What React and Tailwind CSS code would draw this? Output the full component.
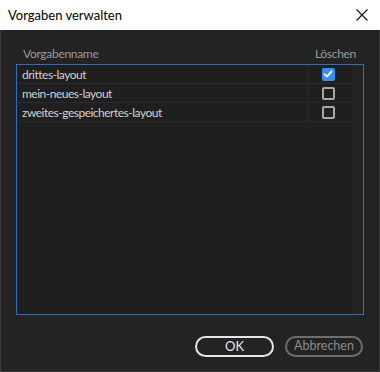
import React from "react";

const rows = [
  { name: "drittes-layout", checked: true },
  { name: "mein-neues-layout", checked: false },
  { name: "zweites-gespeichertes-layout", checked: false },
];

function Box({ checked }) {
  if (checked) {
    return (
      <div className="w-[13px] h-[13px] rounded-[2px] bg-[#378ef0] flex items-center justify-center">
        <svg width="10" height="10" viewBox="0 0 10 10">
          <path d="M1.5 5.2 L4 7.6 L8.6 2.4" fill="none" stroke="#fff" strokeWidth="1.8" strokeLinecap="round" strokeLinejoin="round" />
        </svg>
      </div>
    );
  }
  return <div className="w-[13px] h-[13px] rounded-[2px] border-2 border-[#a8a8a8]" />;
}

export default function App() {
  return (
    <div className="w-[380px] h-[372px] flex flex-col bg-[#232323] overflow-hidden" style={{ fontFamily: '"Lato", "Noto Sans", sans-serif' }}>
      <div className="h-[30px] bg-white flex items-center justify-between pl-[8px] pr-[12px] shrink-0">
        <span className="text-[13px] text-black pt-[1px]">Vorgaben verwalten</span>
        <svg width="12" height="12" viewBox="0 0 12 12">
          <path d="M0.5 0.5 L11.5 11.5 M11.5 0.5 L0.5 11.5" stroke="#111" strokeWidth="1.1" />
        </svg>
      </div>
      <div className="flex-1 flex flex-col border-x border-b border-[#3a3a3a]">
        <div className="flex justify-between items-end h-[34px] pb-[1px] pl-[22px] pr-[23px] text-[12px] text-[#9a9a9a] tracking-[-0.3px]">
          <span>Vorgabenname</span>
          <span>Löschen</span>
        </div>
        <div className="mx-[15px] h-[251px] border border-[#2f6fbd] bg-[#1f1f1f] flex">
          <div className="flex-1 flex flex-col">
            {rows.map((r) => (
              <div key={r.name} className="h-[19px] flex border-b border-[#2c2c2c]">
                <div className="flex-1 flex items-center pl-[5px] pt-[2px] text-[12px] tracking-[-0.5px] text-[#cfcfcf] border-r border-[#2a2a2a]">{r.name}</div>
                <div className="w-[43px] flex items-center justify-center pr-[5px]">
                  <Box checked={r.checked} />
                </div>
              </div>
            ))}
          </div>
          <div className="w-[11px] bg-[#232323]" />
        </div>
        <div className="flex justify-end gap-[11px] pr-[16px] pt-[21px]">
          <button className="w-[79px] h-[21px] rounded-full border-2 border-[#e6e6e6] text-[13px] text-[#e6e6e6] flex items-center justify-center">OK</button>
          <button className="w-[78px] h-[21px] rounded-full border-2 border-[#6e6e6e] text-[12.5px] text-[#8a8a8a] flex items-center justify-center">Abbrechen</button>
        </div>
      </div>
    </div>
  );
}
